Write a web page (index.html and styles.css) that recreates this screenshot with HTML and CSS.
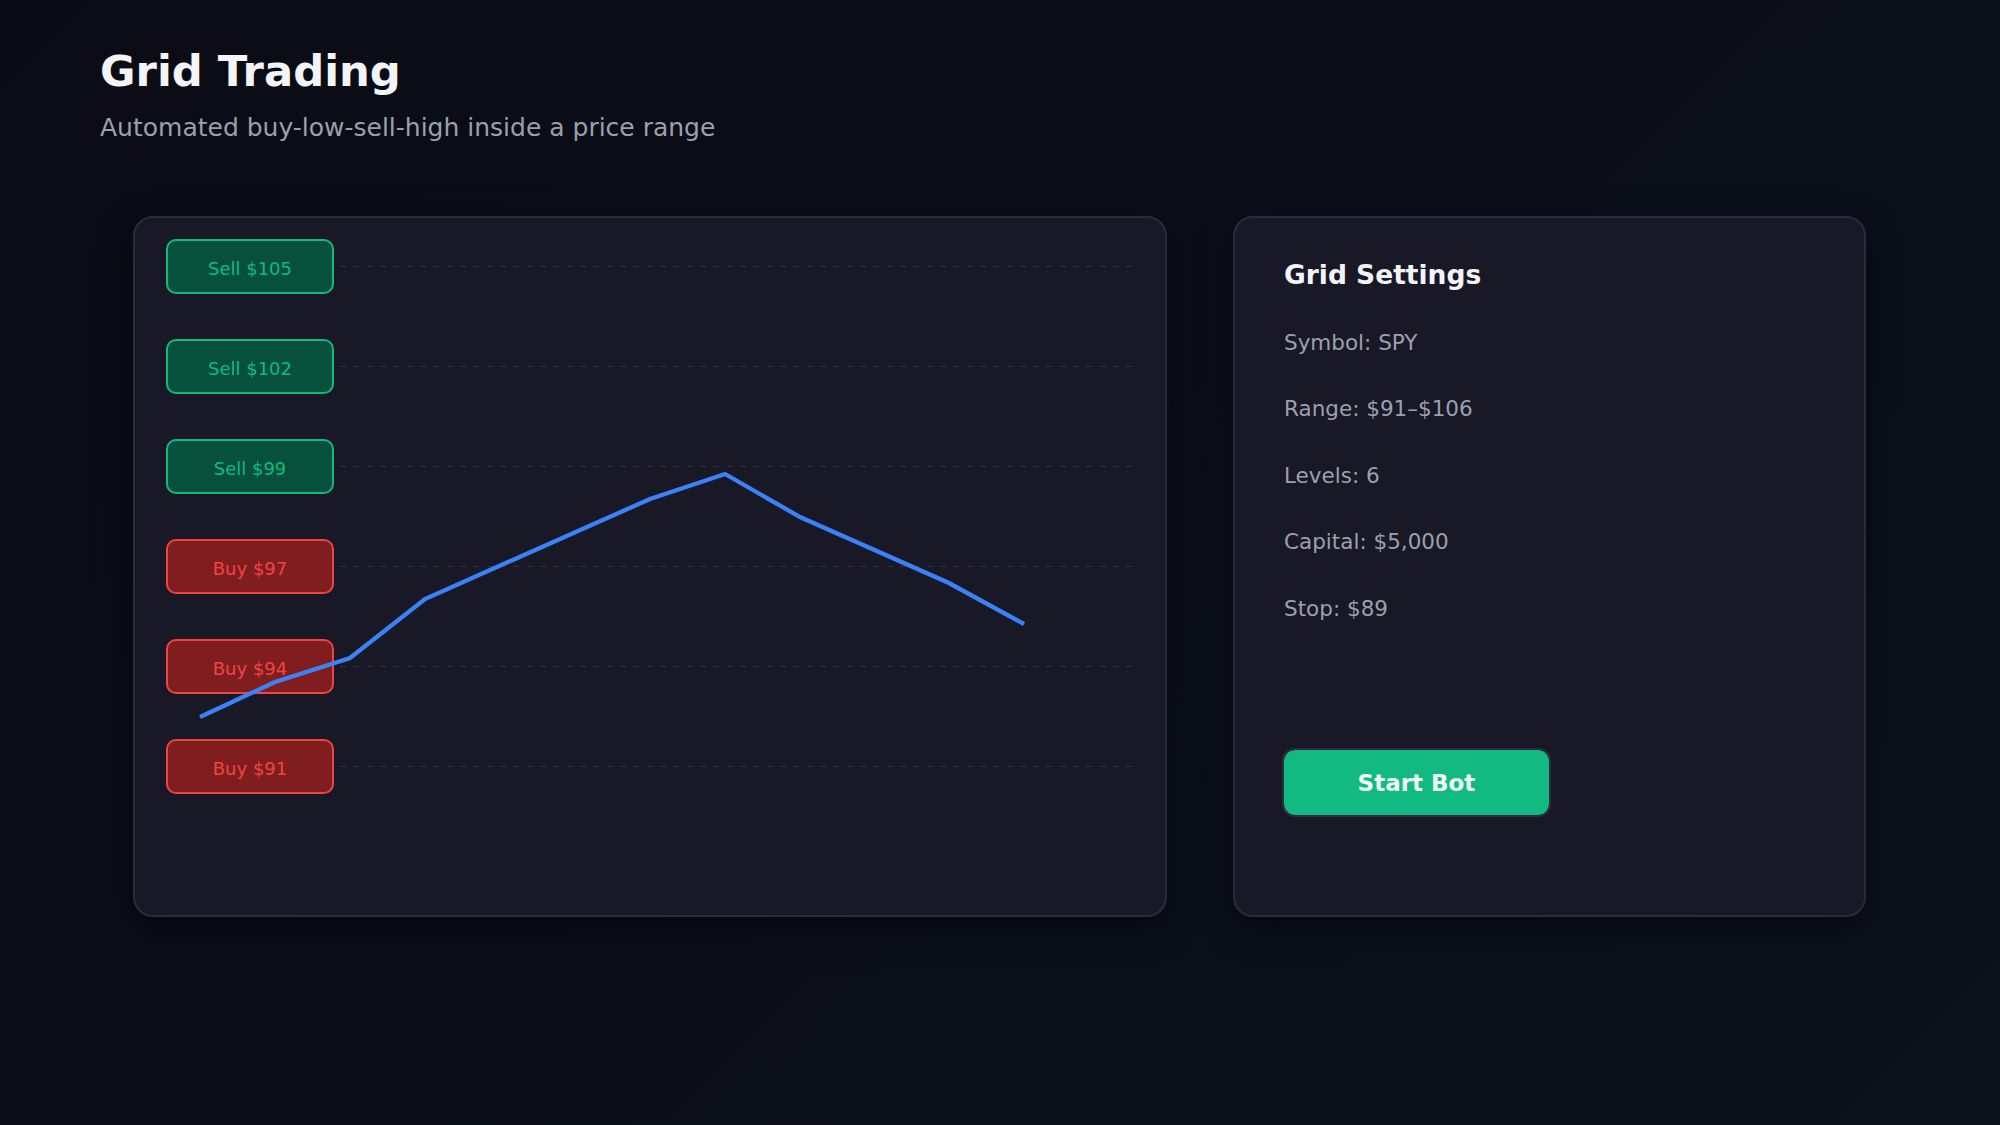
FILE: index.html
```
<!DOCTYPE html>
<html lang="en">
<head>
<meta charset="utf-8">
<title>Grid Trading</title>
<link rel="stylesheet" href="styles.css">
</head>
<body>
<div class="page">
  <header class="header">
    <h1 class="title">Grid Trading</h1>
    <p class="subtitle">Automated buy-low-sell-high inside a price range</p>
  </header>
  <main class="cards">
    <section class="card chart-card">
      <div class="level-row"><div class="level sell">Sell $105</div><div class="dash"></div></div>
      <div class="level-row"><div class="level sell">Sell $102</div><div class="dash"></div></div>
      <div class="level-row"><div class="level sell">Sell $99</div><div class="dash"></div></div>
      <div class="level-row"><div class="level buy">Buy $97</div><div class="dash"></div></div>
      <div class="level-row"><div class="level buy">Buy $94</div><div class="dash"></div></div>
      <div class="level-row"><div class="level buy">Buy $91</div><div class="dash"></div></div>
      <svg class="price-line" width="1030" height="697" viewBox="0 0 1030 697">
        <polyline points="65,499 140,464 215,440 290,381 515,281 590,256 665,299 814,365 889,406" fill="none" stroke="#3b82f6" stroke-width="4.3" stroke-linejoin="miter"/>
      </svg>
    </section>
    <aside class="card settings-card">
      <h2 class="settings-title">Grid Settings</h2>
      <ul class="settings-list">
        <li>Symbol: SPY</li>
        <li>Range: $91–$106</li>
        <li>Levels: 6</li>
        <li>Capital: $5,000</li>
        <li>Stop: $89</li>
      </ul>
      <button class="start-btn" type="button">Start Bot</button>
    </aside>
  </main>
</div>
</body>
</html>
```
FILE: styles.css
```
* { box-sizing: border-box; }
html, body {
  margin: 0;
  padding: 0;
  height: 100%;
}
body {
  background: linear-gradient(135deg, #0a0b15 0%, #0b0e19 50%, #0c111c 100%);
  font-family: "DejaVu Sans", "Liberation Sans", sans-serif;
  color: #f3f4f6;
  width: 2000px;
  height: 1125px;
  overflow: hidden;
}
.page {
  padding: 46px 0 0 100px;
}
.title {
  margin: 0;
  font-size: 43.3px;
  line-height: 50px;
  font-weight: bold;
  color: #f3f4f6;
}
.subtitle {
  margin: 17px 0 0;
  font-size: 25px;
  line-height: 30px;
  color: #9aa1ad;
}
.cards {
  display: flex;
  gap: 66px;
  margin: 73px 0 0 33px;
}
.card {
  height: 701px;
  background: #181826;
  border: 2px solid #2a2c3d;
  border-radius: 20px;
  box-shadow: 0 12px 36px rgba(0, 0, 0, 0.45);
}
.chart-card {
  position: relative;
  width: 1034px;
  padding: 21px 32px 0 31px;
  display: flex;
  flex-direction: column;
  gap: 45px;
}
.level-row {
  display: flex;
  align-items: center;
  gap: 6px;
  height: 55px;
}
.level {
  flex: 0 0 168px;
  height: 55px;
  border: 2px solid;
  border-radius: 10px;
  text-align: center;
  font-size: 18px;
  line-height: 44px;
  padding-top: 6px;
}
.sell {
  background: #07503c;
  border-color: #10b981;
  color: #10b981;
}
.buy {
  background: #801d1e;
  border-color: #ef4444;
  color: #ef4444;
}
.dash {
  flex: 1;
  height: 1.5px;
  background-image: repeating-linear-gradient(90deg, #2e3348 0 6px, transparent 6px 13.33px);
}
.price-line {
  position: absolute;
  left: 0;
  top: 0;
  pointer-events: none;
}
.settings-card {
  width: 633px;
  padding: 40.5px 0 0 49px;
}
.settings-title {
  margin: 0;
  font-size: 26.5px;
  line-height: 32px;
  font-weight: bold;
  color: #f3f4f6;
}
.settings-list {
  list-style: none;
  margin: 19px 0 0;
  padding: 0;
}
.settings-list li {
  font-size: 21.5px;
  line-height: 66.5px;
  color: #9aa1ad;
}
.start-btn {
  display: block;
  margin: 106px 0 0 -2px;
  width: 269px;
  height: 69px;
  border: 2px solid #2c2d41;
  border-radius: 13px;
  background: #12b981;
  background-clip: padding-box;
  color: #eefaf4;
  font-family: "DejaVu Sans", "Liberation Sans", sans-serif;
  font-size: 23px;
  font-weight: bold;
  padding: 0;
  cursor: pointer;
}
```
